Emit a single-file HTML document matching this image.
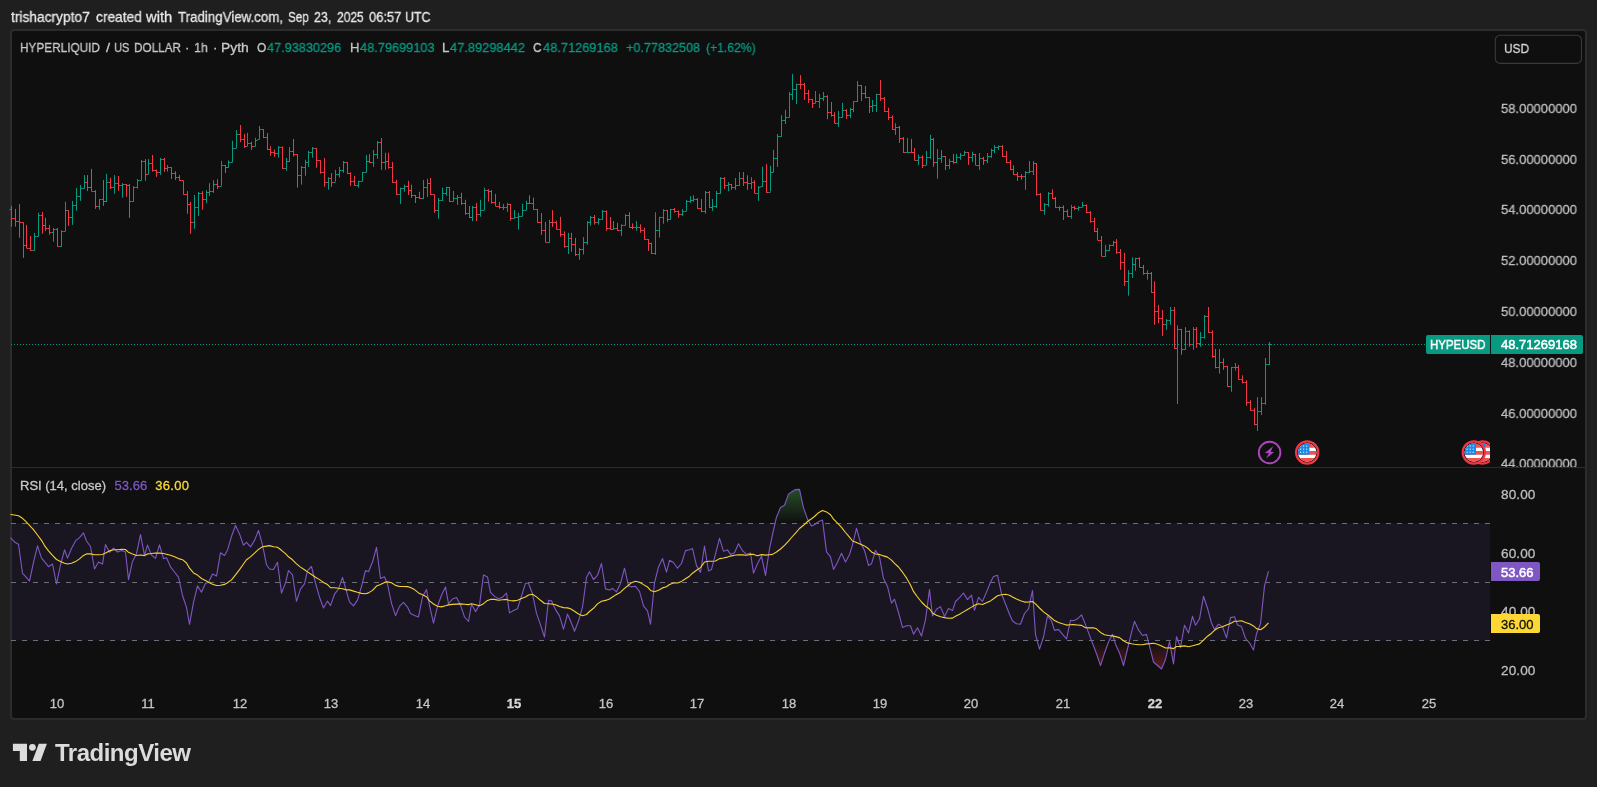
<!DOCTYPE html><html><head><meta charset="utf-8"><title>HYPEUSD chart</title><style>
html,body{margin:0;padding:0}
body{width:1597px;height:787px;background:#1f1f1f;position:relative;overflow:hidden;font-family:"Liberation Sans",sans-serif;color:#c9c9c9}
.t{position:absolute;white-space:nowrap;line-height:1;will-change:transform;-webkit-text-stroke:0.3px}
.ax{font-size:13.6px;color:#bebebe;transform:scaleX(0.957);transform-origin:0 50%}
.tm{font-size:13px;color:#c4c4c4;transform:translateX(-50%)}
.g{color:#089981}
</style></head><body>
<svg width="1597" height="787" viewBox="0 0 1597 787" style="position:absolute;left:0;top:0">
<defs>
<linearGradient id="gob" x1="0" y1="435.3" x2="0" y2="523.3" gradientUnits="userSpaceOnUse"><stop offset="0" stop-color="#4caf50" stop-opacity="1"/><stop offset="1" stop-color="#4caf50" stop-opacity="0"/></linearGradient>
<linearGradient id="gos" x1="0" y1="640.7" x2="0" y2="728.7" gradientUnits="userSpaceOnUse"><stop offset="0" stop-color="#f23645" stop-opacity="0"/><stop offset="1" stop-color="#f23645" stop-opacity="1"/></linearGradient>
<clipPath id="paneclip"><rect x="12" y="31" width="1478" height="436"/></clipPath>
</defs>
<rect x="11" y="30" width="1575" height="689" rx="3" fill="#0f0f0f" stroke="#2c2c2c" stroke-width="2"/>
<rect x="12" y="467" width="1573" height="1" fill="#2c2c2c"/>
<path d="M11 344.5H1426" stroke="#089981" stroke-width="1" stroke-dasharray="1 2" fill="none" shape-rendering="crispEdges"/>
<path d="M34.5 232.9V250.7M32.5 250.5H34.5M34.5 236.5H36.5M38.5 212.8V236.5M36.5 236.5H38.5M38.5 215.5H40.5M53.5 227.9V241.8M51.5 232.5H53.5M53.5 229.5H55.5M61.5 230.3V246.6M59.5 246.5H61.5M61.5 231.5H63.5M65.5 201.8V231.1M63.5 231.5H65.5M65.5 210.5H67.5M72.5 200.9V224.9M70.5 217.5H72.5M72.5 205.5H74.5M76.5 187.9V210.7M74.5 205.5H76.5M76.5 196.5H78.5M80.5 184.9V200.9M78.5 196.5H80.5M80.5 188.5H82.5M84.5 175.1V188.5M82.5 188.5H84.5M84.5 182.5H86.5M99.5 199.1V209.8M97.5 206.5H99.5M99.5 199.5H101.5M106.5 173.9V202.2M104.5 201.5H106.5M106.5 182.5H108.5M114.5 175.1V193.8M112.5 187.5H114.5M114.5 183.5H116.5M122.5 183.1V197.7M120.5 185.5H122.5M122.5 184.5H124.5M133.5 186.2V201.8M131.5 201.5H133.5M133.5 187.5H135.5M137.5 179.0V188.5M135.5 187.5H137.5M137.5 180.5H139.5M141.5 160.0V180.5M139.5 180.5H141.5M141.5 161.5H143.5M148.5 159.1V174.2M146.5 174.5H148.5M148.5 163.5H150.5M160.5 157.9V174.8M158.5 172.5H160.5M160.5 159.5H162.5M167.5 165.0V171.6M165.5 168.5H167.5M167.5 167.5H169.5M194.5 195.0V228.8M192.5 222.5H194.5M194.5 207.5H196.5M198.5 192.0V216.0M196.5 207.5H198.5M198.5 193.5H200.5M206.5 190.2V203.1M204.5 199.5H206.5M206.5 192.5H208.5M209.5 183.1V195.9M207.5 192.5H209.5M209.5 191.5H211.5M213.5 180.1V192.9M211.5 191.5H213.5M213.5 184.5H215.5M221.5 160.9V185.8M219.5 186.5H221.5M221.5 165.5H223.5M228.5 160.4V167.7M226.5 167.5H228.5M228.5 162.5H230.5M232.5 140.8V162.1M230.5 162.5H232.5M232.5 148.5H234.5M236.5 130.1V147.9M234.5 148.5H236.5M236.5 134.5H238.5M247.5 132.8V146.1M245.5 146.5H247.5M247.5 143.5H249.5M255.5 137.8V146.3M253.5 146.5H255.5M255.5 140.5H257.5M259.5 126.0V139.3M257.5 139.5H259.5M259.5 129.5H261.5M278.5 146.1V157.7M276.5 153.5H278.5M278.5 147.5H280.5M286.5 158.0V170.8M284.5 168.5H286.5M286.5 161.5H288.5M289.5 147.0V161.9M287.5 161.5H289.5M289.5 151.5H291.5M301.5 166.0V184.7M299.5 175.5H301.5M301.5 167.5H303.5M305.5 159.8V175.8M303.5 167.5H305.5M305.5 162.5H307.5M308.5 150.9V166.9M306.5 162.5H308.5M308.5 152.5H310.5M312.5 147.0V157.7M310.5 152.5H312.5M312.5 148.5H314.5M328.5 177.2V189.7M326.5 182.5H328.5M328.5 178.5H330.5M335.5 169.9V181.7M333.5 182.5H335.5M335.5 174.5H337.5M339.5 166.9V177.6M337.5 174.5H339.5M339.5 170.5H341.5M343.5 161.0V172.8M341.5 170.5H343.5M343.5 162.5H345.5M358.5 180.8V187.7M356.5 185.5H358.5M358.5 181.5H360.5M362.5 171.9V181.1M360.5 181.5H362.5M362.5 172.5H364.5M366.5 155.0V172.2M364.5 172.5H366.5M366.5 161.5H368.5M373.5 150.0V166.9M371.5 162.5H373.5M373.5 154.5H375.5M377.5 141.1V158.9M375.5 154.5H377.5M377.5 142.5H379.5M385.5 152.7V169.9M383.5 162.5H385.5M385.5 161.5H387.5M400.5 187.7V203.9M398.5 194.5H400.5M400.5 188.5H402.5M404.5 184.7V191.8M402.5 188.5H404.5M404.5 186.5H406.5M423.5 179.9V198.9M421.5 198.5H423.5M423.5 187.5H425.5M427.5 178.8V197.1M425.5 187.5H427.5M427.5 183.5H429.5M438.5 198.0V218.8M436.5 210.5H438.5M438.5 200.5H440.5M442.5 187.7V200.7M440.5 200.5H442.5M442.5 193.5H444.5M446.5 186.8V195.7M444.5 193.5H446.5M446.5 187.5H448.5M453.5 190.9V201.6M451.5 201.5H453.5M453.5 198.5H455.5M457.5 195.0V204.8M455.5 198.5H457.5M457.5 197.5H459.5M472.5 206.0V221.1M470.5 217.5H472.5M472.5 207.5H474.5M480.5 199.8V216.7M478.5 214.5H480.5M480.5 210.5H482.5M484.5 187.7V209.9M482.5 210.5H484.5M484.5 190.5H486.5M503.5 203.9V209.9M501.5 207.5H503.5M503.5 207.5H505.5M507.5 202.8V211.9M505.5 207.5H507.5M507.5 204.5H509.5M514.5 210.0V218.4M512.5 218.5H514.5M514.5 217.5H516.5M518.5 212.7V229.6M516.5 217.5H518.5M518.5 216.5H520.5M522.5 203.8V216.3M520.5 216.5H522.5M522.5 210.5H524.5M526.5 200.8V210.0M524.5 210.5H526.5M526.5 203.5H528.5M549.5 219.8V242.6M547.5 242.5H549.5M549.5 222.5H551.5M568.5 232.8V254.0M566.5 246.5H568.5M568.5 238.5H570.5M579.5 247.9V259.8M577.5 254.5H579.5M579.5 249.5H581.5M583.5 237.1V254.5M581.5 249.5H583.5M583.5 242.5H585.5M587.5 221.1V244.7M585.5 242.5H587.5M587.5 222.5H589.5M590.5 215.9V225.7M588.5 222.5H590.5M590.5 217.5H592.5M598.5 218.0V224.6M596.5 222.5H598.5M598.5 219.5H600.5M602.5 210.0V219.8M600.5 219.5H602.5M602.5 211.5H604.5M613.5 221.1V229.6M611.5 229.5H613.5M613.5 228.5H615.5M621.5 224.3V235.8M619.5 230.5H621.5M621.5 225.5H623.5M625.5 214.1V225.7M623.5 225.5H625.5M625.5 215.5H627.5M636.5 221.1V230.8M634.5 227.5H636.5M636.5 227.5H638.5M655.5 212.2V254.8M653.5 253.5H655.5M655.5 230.5H657.5M659.5 216.8V237.6M657.5 230.5H659.5M659.5 217.5H661.5M663.5 209.1V223.7M661.5 217.5H663.5M663.5 210.5H665.5M670.5 208.8V219.5M668.5 219.5H670.5M670.5 209.5H672.5M682.5 209.1V215.9M680.5 214.5H682.5M682.5 211.5H684.5M686.5 199.9V210.9M684.5 211.5H686.5M686.5 201.5H688.5M690.5 196.2V202.9M688.5 201.5H690.5M690.5 200.5H692.5M693.5 195.3V201.7M691.5 200.5H693.5M693.5 199.5H695.5M705.5 191.0V213.6M703.5 211.5H705.5M705.5 192.5H707.5M712.5 199.0V210.9M710.5 207.5H712.5M712.5 206.5H714.5M716.5 191.0V207.9M714.5 206.5H716.5M716.5 193.5H718.5M720.5 177.1V193.7M718.5 193.5H720.5M720.5 178.5H722.5M728.5 182.1V191.0M726.5 185.5H728.5M728.5 184.5H730.5M735.5 178.0V189.9M733.5 187.5H735.5M735.5 185.5H737.5M739.5 172.1V186.0M737.5 185.5H739.5M739.5 178.5H741.5M751.5 177.1V189.0M749.5 183.5H751.5M751.5 182.5H753.5M758.5 186.0V200.8M756.5 193.5H758.5M758.5 187.5H760.5M762.5 166.7V186.8M760.5 186.5H762.5M762.5 181.5H764.5M770.5 165.8V191.6M768.5 192.5H770.5M770.5 172.5H772.5M773.5 149.8V172.2M771.5 172.5H773.5M773.5 158.5H775.5M777.5 134.0V166.9M775.5 158.5H777.5M777.5 136.5H779.5M781.5 115.2V136.7M779.5 136.5H781.5M781.5 120.5H783.5M785.5 109.8V124.0M783.5 120.5H785.5M785.5 117.5H787.5M789.5 92.0V117.1M787.5 117.5H789.5M789.5 94.5H791.5M792.5 73.9V100.0M790.5 94.5H792.5M792.5 89.5H794.5M796.5 83.7V104.1M794.5 89.5H796.5M796.5 84.5H798.5M815.5 91.1V103.2M813.5 103.5H815.5M815.5 101.5H817.5M819.5 93.8V108.0M817.5 101.5H819.5M819.5 98.5H821.5M823.5 92.0V101.1M821.5 98.5H823.5M823.5 96.5H825.5M838.5 110.9V126.9M836.5 123.5H838.5M838.5 117.5H840.5M842.5 102.9V117.8M840.5 117.5H842.5M842.5 110.5H844.5M850.5 108.0V118.0M848.5 115.5H850.5M850.5 109.5H852.5M853.5 101.1V112.1M851.5 109.5H853.5M853.5 101.5H855.5M857.5 81.0V102.0M855.5 101.5H857.5M857.5 85.5H859.5M872.5 100.0V112.1M870.5 106.5H872.5M872.5 105.5H874.5M876.5 93.8V112.1M874.5 105.5H876.5M876.5 94.5H878.5M895.5 123.2V134.9M893.5 129.5H895.5M895.5 127.5H897.5M907.5 137.9V152.7M905.5 152.5H907.5M907.5 152.5H909.5M918.5 154.5V164.9M916.5 160.5H918.5M918.5 157.5H920.5M926.5 150.9V164.9M924.5 165.5H926.5M926.5 157.5H928.5M930.5 134.9V158.9M928.5 157.5H930.5M930.5 139.5H932.5M937.5 149.1V178.8M935.5 162.5H937.5M937.5 158.5H939.5M941.5 150.0V162.8M939.5 158.5H941.5M941.5 156.5H943.5M949.5 158.9V169.0M947.5 165.5H949.5M949.5 161.5H951.5M956.5 153.9V163.2M954.5 162.5H956.5M956.5 157.5H958.5M960.5 153.0V159.8M958.5 157.5H960.5M960.5 155.5H962.5M964.5 150.9V155.7M962.5 155.5H964.5M964.5 152.5H966.5M972.5 151.8V161.9M970.5 157.5H972.5M972.5 154.5H974.5M979.5 153.0V169.9M977.5 165.5H979.5M979.5 158.5H981.5M987.5 153.0V163.2M985.5 160.5H987.5M987.5 156.5H989.5M991.5 148.6V157.8M989.5 156.5H991.5M991.5 150.5H993.5M994.5 145.0V153.0M992.5 150.5H994.5M994.5 147.5H996.5M998.5 145.4V150.0M996.5 147.5H998.5M998.5 146.5H1000.5M1025.5 171.1V189.8M1023.5 176.5H1025.5M1025.5 172.5H1027.5M1029.5 161.0V172.9M1027.5 172.5H1029.5M1029.5 171.5H1031.5M1033.5 161.0V175.0M1031.5 171.5H1033.5M1033.5 163.5H1035.5M1044.5 203.1V214.7M1042.5 210.5H1044.5M1044.5 204.5H1046.5M1048.5 192.1V206.7M1046.5 204.5H1048.5M1048.5 193.5H1050.5M1059.5 206.2V210.8M1057.5 207.5H1059.5M1059.5 207.5H1061.5M1071.5 204.9V218.8M1069.5 216.5H1071.5M1071.5 207.5H1073.5M1078.5 206.2V210.8M1076.5 208.5H1078.5M1078.5 207.5H1080.5M1082.5 201.9V207.2M1080.5 207.5H1082.5M1082.5 205.5H1084.5M1105.5 244.9V256.8M1103.5 256.5H1105.5M1105.5 250.5H1107.5M1109.5 244.4V251.1M1107.5 250.5H1109.5M1109.5 245.5H1111.5M1113.5 240.8V246.2M1111.5 245.5H1113.5M1113.5 242.5H1115.5M1128.5 270.2V295.7M1126.5 281.5H1128.5M1128.5 273.5H1130.5M1132.5 257.3V277.9M1130.5 273.5H1132.5M1132.5 264.5H1134.5M1135.5 257.8V270.8M1133.5 264.5H1135.5M1135.5 258.5H1137.5M1147.5 270.2V279.7M1145.5 273.5H1147.5M1147.5 273.5H1149.5M1166.5 319.1V329.8M1164.5 324.5H1166.5M1166.5 320.5H1168.5M1170.5 307.0V324.8M1168.5 320.5H1170.5M1170.5 310.5H1172.5M1177.5 325.4V404.0M1175.5 348.5H1177.5M1177.5 329.5H1179.5M1185.5 327.1V349.7M1183.5 349.5H1185.5M1185.5 331.5H1187.5M1193.5 327.1V349.7M1191.5 344.5H1193.5M1193.5 329.5H1195.5M1200.5 331.9V346.7M1198.5 343.5H1200.5M1200.5 337.5H1202.5M1204.5 315.0V338.7M1202.5 337.5H1204.5M1204.5 316.5H1206.5M1219.5 349.0V373.7M1217.5 367.5H1219.5M1219.5 362.5H1221.5M1231.5 366.9V391.8M1229.5 386.5H1231.5M1231.5 367.5H1233.5M1235.5 363.0V370.5M1233.5 367.5H1235.5M1235.5 367.5H1237.5M1257.5 397.1V430.9M1255.5 424.5H1257.5M1257.5 411.5H1259.5M1261.5 397.1V414.9M1259.5 411.5H1261.5M1261.5 403.5H1263.5M1265.5 358.0V404.6M1263.5 403.5H1265.5M1265.5 364.5H1267.5M1269.5 342.0V364.8M1267.5 364.5H1269.5M1269.5 344.5H1271.5" stroke="#089981" stroke-width="1" fill="none"/>
<path d="M11.5 205.9V226.7M9.5 209.5H11.5M11.5 218.5H13.5M15.5 208.9V226.7M13.5 218.5H15.5M15.5 221.5H17.5M19.5 204.1V237.7M17.5 221.5H19.5M19.5 222.5H21.5M23.5 222.3V257.8M21.5 222.5H23.5M23.5 245.5H25.5M26.5 224.9V248.0M24.5 245.5H26.5M26.5 248.5H28.5M30.5 236.0V250.7M28.5 248.5H30.5M30.5 250.5H32.5M42.5 211.9V233.8M40.5 215.5H42.5M42.5 225.5H44.5M45.5 217.8V231.1M43.5 225.5H45.5M45.5 228.5H47.5M49.5 224.9V234.7M47.5 228.5H49.5M49.5 232.5H51.5M57.5 227.9V246.6M55.5 229.5H57.5M57.5 246.5H59.5M68.5 210.3V225.8M66.5 210.5H68.5M68.5 217.5H70.5M87.5 175.1V191.1M85.5 182.5H87.5M87.5 187.5H89.5M91.5 168.9V191.1M89.5 187.5H91.5M91.5 191.5H93.5M95.5 190.2V208.9M93.5 191.5H95.5M95.5 206.5H97.5M103.5 179.9V205.9M101.5 199.5H103.5M103.5 201.5H105.5M110.5 177.8V189.0M108.5 182.5H110.5M110.5 187.5H112.5M118.5 176.0V190.8M116.5 183.5H118.5M118.5 185.5H120.5M126.5 184.0V196.8M124.5 184.5H126.5M126.5 185.5H128.5M129.5 184.0V217.8M127.5 185.5H129.5M129.5 201.5H131.5M145.5 159.1V180.8M143.5 161.5H145.5M145.5 174.5H147.5M152.5 155.0V171.6M150.5 163.5H152.5M152.5 170.5H154.5M156.5 169.4V176.9M154.5 170.5H156.5M156.5 172.5H158.5M164.5 157.9V171.9M162.5 159.5H164.5M164.5 168.5H166.5M171.5 167.1V179.0M169.5 167.5H171.5M171.5 173.5H173.5M175.5 171.2V179.9M173.5 173.5H175.5M175.5 177.5H177.5M179.5 175.1V180.8M177.5 177.5H179.5M179.5 180.5H181.5M183.5 180.5V194.7M181.5 180.5H183.5M183.5 194.5H185.5M187.5 191.1V213.7M185.5 194.5H187.5M187.5 204.5H189.5M190.5 201.8V233.8M188.5 204.5H190.5M190.5 222.5H192.5M202.5 191.1V209.8M200.5 193.5H202.5M202.5 199.5H204.5M217.5 179.2V189.0M215.5 184.5H217.5M217.5 186.5H219.5M225.5 165.0V173.0M223.5 165.5H225.5M225.5 167.5H227.5M240.5 125.0V142.2M238.5 134.5H240.5M240.5 139.5H242.5M244.5 133.9V147.9M242.5 139.5H244.5M244.5 146.5H246.5M251.5 141.7V149.9M249.5 143.5H251.5M251.5 146.5H253.5M263.5 129.2V138.1M261.5 129.5H263.5M263.5 137.5H265.5M267.5 133.1V150.0M265.5 137.5H267.5M267.5 149.5H269.5M270.5 146.1V155.9M268.5 149.5H270.5M270.5 152.5H272.5M274.5 149.5V156.8M272.5 152.5H274.5M274.5 153.5H276.5M282.5 146.5V169.0M280.5 147.5H282.5M282.5 168.5H284.5M293.5 139.0V156.6M291.5 151.5H293.5M293.5 154.5H295.5M297.5 154.5V187.7M295.5 154.5H297.5M297.5 175.5H299.5M316.5 147.9V167.8M314.5 148.5H316.5M316.5 160.5H318.5M320.5 160.3V173.7M318.5 160.5H320.5M320.5 172.5H322.5M324.5 158.0V186.8M322.5 172.5H324.5M324.5 182.5H326.5M331.5 173.1V186.8M329.5 178.5H331.5M331.5 182.5H333.5M347.5 162.1V174.0M345.5 162.5H347.5M347.5 173.5H349.5M350.5 172.2V185.9M348.5 173.5H350.5M350.5 181.5H352.5M354.5 175.8V185.6M352.5 181.5H354.5M354.5 185.5H356.5M369.5 154.1V162.8M367.5 161.5H369.5M369.5 162.5H371.5M381.5 137.9V169.9M379.5 142.5H381.5M381.5 162.5H383.5M388.5 152.7V168.7M386.5 161.5H388.5M388.5 167.5H390.5M392.5 161.9V182.9M390.5 167.5H392.5M392.5 182.5H394.5M396.5 179.9V195.0M394.5 182.5H396.5M396.5 194.5H398.5M408.5 180.8V195.0M406.5 186.5H408.5M408.5 190.5H410.5M411.5 184.7V198.0M409.5 190.5H411.5M411.5 195.5H413.5M415.5 195.0V203.0M413.5 195.5H415.5M415.5 197.5H417.5M419.5 191.8V198.9M417.5 197.5H419.5M419.5 198.5H421.5M430.5 177.9V195.0M428.5 183.5H430.5M430.5 194.5H432.5M434.5 194.5V212.8M432.5 194.5H434.5M434.5 210.5H436.5M449.5 187.0V201.9M447.5 187.5H449.5M449.5 201.5H451.5M461.5 192.7V204.8M459.5 197.5H461.5M461.5 203.5H463.5M465.5 199.8V214.9M463.5 203.5H465.5M465.5 213.5H467.5M469.5 206.0V217.9M467.5 213.5H469.5M469.5 217.5H471.5M476.5 202.8V221.1M474.5 207.5H476.5M476.5 214.5H478.5M488.5 189.1V201.6M486.5 190.5H488.5M488.5 191.5H490.5M491.5 190.0V203.7M489.5 191.5H491.5M491.5 202.5H493.5M495.5 193.9V206.0M493.5 202.5H495.5M495.5 206.5H497.5M499.5 201.9V208.7M497.5 206.5H499.5M499.5 207.5H501.5M510.5 203.8V220.7M508.5 204.5H510.5M510.5 218.5H512.5M529.5 195.3V203.8M527.5 203.5H529.5M529.5 203.5H531.5M533.5 197.6V209.7M531.5 203.5H533.5M533.5 209.5H535.5M537.5 209.1V222.8M535.5 209.5H537.5M537.5 222.5H539.5M541.5 213.1V234.9M539.5 222.5H541.5M541.5 230.5H543.5M545.5 221.9V242.0M543.5 230.5H545.5M545.5 242.5H547.5M552.5 210.0V226.9M550.5 222.5H552.5M552.5 222.5H554.5M556.5 220.7V229.6M554.5 222.5H556.5M556.5 229.5H558.5M560.5 216.8V236.7M558.5 229.5H560.5M560.5 234.5H562.5M564.5 231.4V247.7M562.5 234.5H564.5M564.5 246.5H566.5M571.5 232.8V251.8M569.5 238.5H571.5M571.5 244.5H573.5M575.5 237.9V255.9M573.5 244.5H575.5M575.5 254.5H577.5M594.5 215.0V224.6M592.5 217.5H594.5M594.5 222.5H596.5M606.5 210.4V230.8M604.5 211.5H606.5M606.5 228.5H608.5M610.5 217.1V229.6M608.5 228.5H610.5M610.5 229.5H612.5M617.5 222.8V230.8M615.5 228.5H617.5M617.5 230.5H619.5M629.5 212.2V227.8M627.5 215.5H629.5M629.5 227.5H631.5M632.5 223.4V229.1M630.5 227.5H632.5M632.5 227.5H634.5M640.5 224.3V232.8M638.5 227.5H640.5M640.5 230.5H642.5M644.5 227.8V239.7M642.5 230.5H644.5M644.5 239.5H646.5M648.5 239.0V250.9M646.5 239.5H648.5M648.5 243.5H650.5M651.5 242.6V254.0M649.5 243.5H651.5M651.5 253.5H653.5M667.5 210.0V221.9M665.5 210.5H667.5M667.5 219.5H669.5M674.5 207.9V212.7M672.5 209.5H674.5M674.5 211.5H676.5M678.5 210.4V217.7M676.5 211.5H678.5M678.5 214.5H680.5M697.5 198.1V208.8M695.5 199.5H697.5M697.5 208.5H699.5M701.5 199.0V212.2M699.5 208.5H701.5M701.5 211.5H703.5M709.5 191.0V207.7M707.5 192.5H709.5M709.5 207.5H711.5M724.5 177.1V189.0M722.5 178.5H724.5M724.5 185.5H726.5M731.5 183.9V189.9M729.5 184.5H731.5M731.5 187.5H733.5M743.5 172.1V186.0M741.5 178.5H743.5M743.5 182.5H745.5M747.5 175.3V189.9M745.5 182.5H747.5M747.5 183.5H749.5M754.5 180.2V193.1M752.5 182.5H754.5M754.5 193.5H756.5M766.5 164.1V192.7M764.5 181.5H766.5M766.5 192.5H768.5M800.5 75.1V89.0M798.5 84.5H800.5M800.5 84.5H802.5M804.5 82.8V100.0M802.5 84.5H804.5M804.5 93.5H806.5M808.5 89.9V102.9M806.5 93.5H808.5M808.5 99.5H810.5M812.5 98.8V108.0M810.5 99.5H812.5M812.5 103.5H814.5M827.5 95.2V119.2M825.5 96.5H827.5M827.5 112.5H829.5M831.5 102.0V116.6M829.5 112.5H831.5M831.5 115.5H833.5M834.5 112.1V123.2M832.5 115.5H834.5M834.5 123.5H836.5M846.5 109.1V118.9M844.5 110.5H846.5M846.5 115.5H848.5M861.5 85.1V101.1M859.5 85.5H861.5M861.5 93.5H863.5M865.5 86.0V98.3M863.5 93.5H865.5M865.5 97.5H867.5M869.5 97.0V113.0M867.5 97.5H869.5M869.5 106.5H871.5M880.5 80.1V100.9M878.5 94.5H880.5M880.5 98.5H882.5M884.5 97.0V112.1M882.5 98.5H884.5M884.5 111.5H886.5M888.5 107.7V120.1M886.5 111.5H888.5M888.5 117.5H890.5M892.5 115.3V129.9M890.5 117.5H892.5M892.5 129.5H894.5M899.5 126.0V142.9M897.5 127.5H899.5M899.5 138.5H901.5M903.5 137.0V153.0M901.5 138.5H903.5M903.5 152.5H905.5M911.5 138.8V152.1M909.5 152.5H911.5M911.5 152.5H913.5M914.5 148.1V160.1M912.5 152.5H914.5M914.5 160.5H916.5M922.5 155.2V168.1M920.5 157.5H922.5M922.5 165.5H924.5M933.5 137.9V166.9M931.5 139.5H933.5M933.5 162.5H935.5M945.5 156.2V169.9M943.5 156.5H945.5M945.5 165.5H947.5M953.5 153.9V163.7M951.5 161.5H953.5M953.5 162.5H955.5M968.5 152.1V164.9M966.5 152.5H968.5M968.5 157.5H970.5M975.5 153.9V164.9M973.5 154.5H975.5M975.5 165.5H977.5M983.5 156.9V164.9M981.5 158.5H983.5M983.5 160.5H985.5M1002.5 145.0V156.9M1000.5 146.5H1002.5M1002.5 156.5H1004.5M1006.5 150.9V163.2M1004.5 156.5H1006.5M1006.5 162.5H1008.5M1010.5 160.1V170.2M1008.5 162.5H1010.5M1010.5 169.5H1012.5M1013.5 165.3V175.0M1011.5 169.5H1013.5M1013.5 174.5H1015.5M1017.5 172.0V180.9M1015.5 174.5H1017.5M1017.5 176.5H1019.5M1021.5 174.1V179.7M1019.5 176.5H1021.5M1021.5 176.5H1023.5M1036.5 163.1V195.7M1034.5 163.5H1036.5M1036.5 194.5H1038.5M1040.5 193.0V210.8M1038.5 194.5H1040.5M1040.5 210.5H1042.5M1052.5 189.3V198.7M1050.5 193.5H1052.5M1052.5 198.5H1054.5M1055.5 196.9V207.9M1053.5 198.5H1055.5M1055.5 207.5H1057.5M1063.5 205.3V220.0M1061.5 207.5H1063.5M1063.5 211.5H1065.5M1067.5 209.4V216.8M1065.5 211.5H1067.5M1067.5 216.5H1069.5M1074.5 205.8V209.9M1072.5 207.5H1074.5M1074.5 208.5H1076.5M1086.5 204.4V213.3M1084.5 205.5H1086.5M1086.5 212.5H1088.5M1090.5 211.1V222.7M1088.5 212.5H1090.5M1090.5 221.5H1092.5M1094.5 217.7V231.9M1092.5 221.5H1094.5M1094.5 231.5H1096.5M1097.5 228.0V240.1M1095.5 231.5H1097.5M1097.5 240.5H1099.5M1101.5 236.0V256.0M1099.5 240.5H1101.5M1101.5 256.5H1103.5M1116.5 239.1V253.8M1114.5 242.5H1116.5M1116.5 252.5H1118.5M1120.5 249.0V269.8M1118.5 252.5H1120.5M1120.5 262.5H1122.5M1124.5 252.8V285.9M1122.5 262.5H1124.5M1124.5 281.5H1126.5M1139.5 257.3V267.6M1137.5 258.5H1139.5M1139.5 267.5H1141.5M1143.5 264.9V274.7M1141.5 267.5H1143.5M1143.5 273.5H1145.5M1151.5 272.0V292.8M1149.5 273.5H1151.5M1151.5 292.5H1153.5M1154.5 281.3V324.8M1152.5 292.5H1154.5M1154.5 311.5H1156.5M1158.5 304.9V323.2M1156.5 311.5H1158.5M1158.5 318.5H1160.5M1162.5 309.9V336.0M1160.5 318.5H1162.5M1162.5 324.5H1164.5M1174.5 307.0V348.8M1172.5 310.5H1174.5M1174.5 348.5H1176.5M1181.5 328.9V354.7M1179.5 329.5H1181.5M1181.5 349.5H1183.5M1189.5 330.3V346.7M1187.5 331.5H1189.5M1189.5 344.5H1191.5M1196.5 327.1V347.9M1194.5 329.5H1196.5M1196.5 343.5H1198.5M1208.5 307.0V332.8M1206.5 316.5H1208.5M1208.5 332.5H1210.5M1212.5 330.3V357.7M1210.5 332.5H1212.5M1212.5 356.5H1214.5M1215.5 349.0V368.4M1213.5 356.5H1215.5M1215.5 367.5H1217.5M1223.5 358.3V369.8M1221.5 362.5H1223.5M1223.5 366.5H1225.5M1227.5 365.7V386.8M1225.5 366.5H1227.5M1227.5 386.5H1229.5M1238.5 365.1V379.9M1236.5 367.5H1238.5M1238.5 379.5H1240.5M1242.5 375.3V383.3M1240.5 379.5H1242.5M1242.5 382.5H1244.5M1246.5 380.2V405.7M1244.5 382.5H1246.5M1246.5 402.5H1248.5M1250.5 400.2V410.8M1248.5 402.5H1250.5M1250.5 410.5H1252.5M1254.5 407.8V425.2M1252.5 410.5H1254.5M1254.5 424.5H1256.5" stroke="#f23645" stroke-width="1" fill="none"/>
<g transform="translate(1269.6 452.5)"><circle r="10.8" fill="#0f0f0f" stroke="#ab47bc" stroke-width="1.9"/><path d="M3.43 -6.26 L-4.68 0.4 L-0.6 0.85 L-3.68 6 L4.53 -0.5 L1.1 -0.85 Z" fill="#ab47bc"/></g>
<g transform="translate(1307.2 452.5)"><circle r="11.1" fill="#0f0f0f" stroke="#f23645" stroke-width="2.2"/><clipPath id="fc1307"><circle r="9.3"/></clipPath><g clip-path="url(#fc1307)"><rect x="-10" y="-10" width="20" height="20" fill="#fff"/><rect x="-10" y="-10" width="20" height="5.25" fill="#ef5350"/><rect x="-10" y="-1.5" width="20" height="3.75" fill="#ef5350"/><rect x="-10" y="5.5" width="20" height="5" fill="#ef5350"/><rect x="-10" y="-10" width="12.25" height="12.25" fill="#1e88e5"/><g fill="#fff" fill-opacity="0.8"><rect x="-7.20" y="-7.00" width="1.2" height="1.2"/><rect x="-7.20" y="-3.90" width="1.2" height="1.2"/><rect x="-7.20" y="-0.85" width="1.2" height="1.2"/><rect x="-4.20" y="-7.00" width="1.2" height="1.2"/><rect x="-4.20" y="-3.90" width="1.2" height="1.2"/><rect x="-4.20" y="-0.85" width="1.2" height="1.2"/><rect x="-1.15" y="-7.00" width="1.2" height="1.2"/><rect x="-1.15" y="-3.90" width="1.2" height="1.2"/><rect x="-1.15" y="-0.85" width="1.2" height="1.2"/></g></g></g>
<g clip-path="url(#paneclip)"><g transform="translate(1482.8 452.5)"><circle r="11.1" fill="#0f0f0f" stroke="#f23645" stroke-width="2.2"/><clipPath id="fc1482"><circle r="9.3"/></clipPath><g clip-path="url(#fc1482)"><rect x="-10" y="-10" width="20" height="20" fill="#fff"/><rect x="-10" y="-10" width="20" height="5.25" fill="#ef5350"/><rect x="-10" y="-1.5" width="20" height="3.75" fill="#ef5350"/><rect x="-10" y="5.5" width="20" height="5" fill="#ef5350"/><rect x="-10" y="-10" width="12.25" height="12.25" fill="#1e88e5"/><g fill="#fff" fill-opacity="0.8"><rect x="-7.20" y="-7.00" width="1.2" height="1.2"/><rect x="-7.20" y="-3.90" width="1.2" height="1.2"/><rect x="-7.20" y="-0.85" width="1.2" height="1.2"/><rect x="-4.20" y="-7.00" width="1.2" height="1.2"/><rect x="-4.20" y="-3.90" width="1.2" height="1.2"/><rect x="-4.20" y="-0.85" width="1.2" height="1.2"/><rect x="-1.15" y="-7.00" width="1.2" height="1.2"/><rect x="-1.15" y="-3.90" width="1.2" height="1.2"/><rect x="-1.15" y="-0.85" width="1.2" height="1.2"/></g></g></g><g transform="translate(1473.8 452.5)"><circle r="11.1" fill="#0f0f0f" stroke="#f23645" stroke-width="2.2"/><clipPath id="fc1473"><circle r="9.3"/></clipPath><g clip-path="url(#fc1473)"><rect x="-10" y="-10" width="20" height="20" fill="#fff"/><rect x="-10" y="-10" width="20" height="5.25" fill="#ef5350"/><rect x="-10" y="-1.5" width="20" height="3.75" fill="#ef5350"/><rect x="-10" y="5.5" width="20" height="5" fill="#ef5350"/><rect x="-10" y="-10" width="12.25" height="12.25" fill="#1e88e5"/><g fill="#fff" fill-opacity="0.8"><rect x="-7.20" y="-7.00" width="1.2" height="1.2"/><rect x="-7.20" y="-3.90" width="1.2" height="1.2"/><rect x="-7.20" y="-0.85" width="1.2" height="1.2"/><rect x="-4.20" y="-7.00" width="1.2" height="1.2"/><rect x="-4.20" y="-3.90" width="1.2" height="1.2"/><rect x="-4.20" y="-0.85" width="1.2" height="1.2"/><rect x="-1.15" y="-7.00" width="1.2" height="1.2"/><rect x="-1.15" y="-3.90" width="1.2" height="1.2"/><rect x="-1.15" y="-0.85" width="1.2" height="1.2"/></g></g></g></g>
<rect x="12" y="523.3" width="1478" height="117.3" fill="#7e57c2" fill-opacity="0.1"/>
<path d="M10.5 523.3 L14.5 523.3 L18.5 523.3 L22.5 523.3 L25.5 523.3 L29.5 523.3 L33.5 523.3 L37.5 523.3 L41.5 523.3 L44.5 523.3 L48.5 523.3 L52.5 523.3 L56.5 523.3 L60.5 523.3 L64.5 523.3 L67.5 523.3 L71.5 523.3 L75.5 523.3 L79.5 523.3 L83.5 523.3 L86.5 523.3 L90.5 523.3 L94.5 523.3 L98.5 523.3 L102.5 523.3 L105.5 523.3 L109.5 523.3 L113.5 523.3 L117.5 523.3 L121.5 523.3 L125.5 523.3 L128.5 523.3 L132.5 523.3 L136.5 523.3 L140.5 523.3 L144.5 523.3 L147.5 523.3 L151.5 523.3 L155.5 523.3 L159.5 523.3 L163.5 523.3 L166.5 523.3 L170.5 523.3 L174.5 523.3 L178.5 523.3 L182.5 523.3 L186.5 523.3 L189.5 523.3 L193.5 523.3 L197.5 523.3 L201.5 523.3 L205.5 523.3 L208.5 523.3 L212.5 523.3 L216.5 523.3 L220.5 523.3 L224.5 523.3 L227.5 523.3 L231.5 523.3 L235.5 523.3 L239.5 523.3 L243.5 523.3 L246.5 523.3 L250.5 523.3 L254.5 523.3 L258.5 523.3 L262.5 523.3 L266.5 523.3 L269.5 523.3 L273.5 523.3 L277.5 523.3 L281.5 523.3 L285.5 523.3 L288.5 523.3 L292.5 523.3 L296.5 523.3 L300.5 523.3 L304.5 523.3 L307.5 523.3 L311.5 523.3 L315.5 523.3 L319.5 523.3 L323.5 523.3 L327.5 523.3 L330.5 523.3 L334.5 523.3 L338.5 523.3 L342.5 523.3 L346.5 523.3 L349.5 523.3 L353.5 523.3 L357.5 523.3 L361.5 523.3 L365.5 523.3 L368.5 523.3 L372.5 523.3 L376.5 523.3 L380.5 523.3 L384.5 523.3 L387.5 523.3 L391.5 523.3 L395.5 523.3 L399.5 523.3 L403.5 523.3 L407.5 523.3 L410.5 523.3 L414.5 523.3 L418.5 523.3 L422.5 523.3 L426.5 523.3 L429.5 523.3 L433.5 523.3 L437.5 523.3 L441.5 523.3 L445.5 523.3 L448.5 523.3 L452.5 523.3 L456.5 523.3 L460.5 523.3 L464.5 523.3 L468.5 523.3 L471.5 523.3 L475.5 523.3 L479.5 523.3 L483.5 523.3 L487.5 523.3 L490.5 523.3 L494.5 523.3 L498.5 523.3 L502.5 523.3 L506.5 523.3 L509.5 523.3 L513.5 523.3 L517.5 523.3 L521.5 523.3 L525.5 523.3 L528.5 523.3 L532.5 523.3 L536.5 523.3 L540.5 523.3 L544.5 523.3 L548.5 523.3 L551.5 523.3 L555.5 523.3 L559.5 523.3 L563.5 523.3 L567.5 523.3 L570.5 523.3 L574.5 523.3 L578.5 523.3 L582.5 523.3 L586.5 523.3 L589.5 523.3 L593.5 523.3 L597.5 523.3 L601.5 523.3 L605.5 523.3 L609.5 523.3 L612.5 523.3 L616.5 523.3 L620.5 523.3 L624.5 523.3 L628.5 523.3 L631.5 523.3 L635.5 523.3 L639.5 523.3 L643.5 523.3 L647.5 523.3 L650.5 523.3 L654.5 523.3 L658.5 523.3 L662.5 523.3 L666.5 523.3 L669.5 523.3 L673.5 523.3 L677.5 523.3 L681.5 523.3 L685.5 523.3 L689.5 523.3 L692.5 523.3 L696.5 523.3 L700.5 523.3 L704.5 523.3 L708.5 523.3 L711.5 523.3 L715.5 523.3 L719.5 523.3 L723.5 523.3 L727.5 523.3 L730.5 523.3 L734.5 523.3 L738.5 523.3 L742.5 523.3 L746.5 523.3 L750.5 523.3 L753.5 523.3 L757.5 523.3 L761.5 523.3 L765.5 523.3 L769.5 523.3 L772.5 523.3 L776.5 517.2 L780.5 507.5 L784.5 505.2 L788.5 494.1 L791.5 491.9 L795.5 489.6 L799.5 489.4 L803.5 507.9 L807.5 519.1 L811.5 523.3 L814.5 523.3 L818.5 521.7 L822.5 520.1 L826.5 523.3 L830.5 523.3 L833.5 523.3 L837.5 523.3 L841.5 523.3 L845.5 523.3 L849.5 523.3 L852.5 523.3 L856.5 523.3 L860.5 523.3 L864.5 523.3 L868.5 523.3 L871.5 523.3 L875.5 523.3 L879.5 523.3 L883.5 523.3 L887.5 523.3 L891.5 523.3 L894.5 523.3 L898.5 523.3 L902.5 523.3 L906.5 523.3 L910.5 523.3 L913.5 523.3 L917.5 523.3 L921.5 523.3 L925.5 523.3 L929.5 523.3 L932.5 523.3 L936.5 523.3 L940.5 523.3 L944.5 523.3 L948.5 523.3 L952.5 523.3 L955.5 523.3 L959.5 523.3 L963.5 523.3 L967.5 523.3 L971.5 523.3 L974.5 523.3 L978.5 523.3 L982.5 523.3 L986.5 523.3 L990.5 523.3 L993.5 523.3 L997.5 523.3 L1001.5 523.3 L1005.5 523.3 L1009.5 523.3 L1012.5 523.3 L1016.5 523.3 L1020.5 523.3 L1024.5 523.3 L1028.5 523.3 L1032.5 523.3 L1035.5 523.3 L1039.5 523.3 L1043.5 523.3 L1047.5 523.3 L1051.5 523.3 L1054.5 523.3 L1058.5 523.3 L1062.5 523.3 L1066.5 523.3 L1070.5 523.3 L1073.5 523.3 L1077.5 523.3 L1081.5 523.3 L1085.5 523.3 L1089.5 523.3 L1093.5 523.3 L1096.5 523.3 L1100.5 523.3 L1104.5 523.3 L1108.5 523.3 L1112.5 523.3 L1115.5 523.3 L1119.5 523.3 L1123.5 523.3 L1127.5 523.3 L1131.5 523.3 L1134.5 523.3 L1138.5 523.3 L1142.5 523.3 L1146.5 523.3 L1150.5 523.3 L1153.5 523.3 L1157.5 523.3 L1161.5 523.3 L1165.5 523.3 L1169.5 523.3 L1173.5 523.3 L1176.5 523.3 L1180.5 523.3 L1184.5 523.3 L1188.5 523.3 L1192.5 523.3 L1195.5 523.3 L1199.5 523.3 L1203.5 523.3 L1207.5 523.3 L1211.5 523.3 L1214.5 523.3 L1218.5 523.3 L1222.5 523.3 L1226.5 523.3 L1230.5 523.3 L1234.5 523.3 L1237.5 523.3 L1241.5 523.3 L1245.5 523.3 L1249.5 523.3 L1253.5 523.3 L1256.5 523.3 L1260.5 523.3 L1264.5 523.3 L1268.5 523.3 L1268.5 523.3 L10.5 523.3Z" fill="url(#gob)"/><path d="M10.5 640.7 L14.5 640.7 L18.5 640.7 L22.5 640.7 L25.5 640.7 L29.5 640.7 L33.5 640.7 L37.5 640.7 L41.5 640.7 L44.5 640.7 L48.5 640.7 L52.5 640.7 L56.5 640.7 L60.5 640.7 L64.5 640.7 L67.5 640.7 L71.5 640.7 L75.5 640.7 L79.5 640.7 L83.5 640.7 L86.5 640.7 L90.5 640.7 L94.5 640.7 L98.5 640.7 L102.5 640.7 L105.5 640.7 L109.5 640.7 L113.5 640.7 L117.5 640.7 L121.5 640.7 L125.5 640.7 L128.5 640.7 L132.5 640.7 L136.5 640.7 L140.5 640.7 L144.5 640.7 L147.5 640.7 L151.5 640.7 L155.5 640.7 L159.5 640.7 L163.5 640.7 L166.5 640.7 L170.5 640.7 L174.5 640.7 L178.5 640.7 L182.5 640.7 L186.5 640.7 L189.5 640.7 L193.5 640.7 L197.5 640.7 L201.5 640.7 L205.5 640.7 L208.5 640.7 L212.5 640.7 L216.5 640.7 L220.5 640.7 L224.5 640.7 L227.5 640.7 L231.5 640.7 L235.5 640.7 L239.5 640.7 L243.5 640.7 L246.5 640.7 L250.5 640.7 L254.5 640.7 L258.5 640.7 L262.5 640.7 L266.5 640.7 L269.5 640.7 L273.5 640.7 L277.5 640.7 L281.5 640.7 L285.5 640.7 L288.5 640.7 L292.5 640.7 L296.5 640.7 L300.5 640.7 L304.5 640.7 L307.5 640.7 L311.5 640.7 L315.5 640.7 L319.5 640.7 L323.5 640.7 L327.5 640.7 L330.5 640.7 L334.5 640.7 L338.5 640.7 L342.5 640.7 L346.5 640.7 L349.5 640.7 L353.5 640.7 L357.5 640.7 L361.5 640.7 L365.5 640.7 L368.5 640.7 L372.5 640.7 L376.5 640.7 L380.5 640.7 L384.5 640.7 L387.5 640.7 L391.5 640.7 L395.5 640.7 L399.5 640.7 L403.5 640.7 L407.5 640.7 L410.5 640.7 L414.5 640.7 L418.5 640.7 L422.5 640.7 L426.5 640.7 L429.5 640.7 L433.5 640.7 L437.5 640.7 L441.5 640.7 L445.5 640.7 L448.5 640.7 L452.5 640.7 L456.5 640.7 L460.5 640.7 L464.5 640.7 L468.5 640.7 L471.5 640.7 L475.5 640.7 L479.5 640.7 L483.5 640.7 L487.5 640.7 L490.5 640.7 L494.5 640.7 L498.5 640.7 L502.5 640.7 L506.5 640.7 L509.5 640.7 L513.5 640.7 L517.5 640.7 L521.5 640.7 L525.5 640.7 L528.5 640.7 L532.5 640.7 L536.5 640.7 L540.5 640.7 L544.5 640.7 L548.5 640.7 L551.5 640.7 L555.5 640.7 L559.5 640.7 L563.5 640.7 L567.5 640.7 L570.5 640.7 L574.5 640.7 L578.5 640.7 L582.5 640.7 L586.5 640.7 L589.5 640.7 L593.5 640.7 L597.5 640.7 L601.5 640.7 L605.5 640.7 L609.5 640.7 L612.5 640.7 L616.5 640.7 L620.5 640.7 L624.5 640.7 L628.5 640.7 L631.5 640.7 L635.5 640.7 L639.5 640.7 L643.5 640.7 L647.5 640.7 L650.5 640.7 L654.5 640.7 L658.5 640.7 L662.5 640.7 L666.5 640.7 L669.5 640.7 L673.5 640.7 L677.5 640.7 L681.5 640.7 L685.5 640.7 L689.5 640.7 L692.5 640.7 L696.5 640.7 L700.5 640.7 L704.5 640.7 L708.5 640.7 L711.5 640.7 L715.5 640.7 L719.5 640.7 L723.5 640.7 L727.5 640.7 L730.5 640.7 L734.5 640.7 L738.5 640.7 L742.5 640.7 L746.5 640.7 L750.5 640.7 L753.5 640.7 L757.5 640.7 L761.5 640.7 L765.5 640.7 L769.5 640.7 L772.5 640.7 L776.5 640.7 L780.5 640.7 L784.5 640.7 L788.5 640.7 L791.5 640.7 L795.5 640.7 L799.5 640.7 L803.5 640.7 L807.5 640.7 L811.5 640.7 L814.5 640.7 L818.5 640.7 L822.5 640.7 L826.5 640.7 L830.5 640.7 L833.5 640.7 L837.5 640.7 L841.5 640.7 L845.5 640.7 L849.5 640.7 L852.5 640.7 L856.5 640.7 L860.5 640.7 L864.5 640.7 L868.5 640.7 L871.5 640.7 L875.5 640.7 L879.5 640.7 L883.5 640.7 L887.5 640.7 L891.5 640.7 L894.5 640.7 L898.5 640.7 L902.5 640.7 L906.5 640.7 L910.5 640.7 L913.5 640.7 L917.5 640.7 L921.5 640.7 L925.5 640.7 L929.5 640.7 L932.5 640.7 L936.5 640.7 L940.5 640.7 L944.5 640.7 L948.5 640.7 L952.5 640.7 L955.5 640.7 L959.5 640.7 L963.5 640.7 L967.5 640.7 L971.5 640.7 L974.5 640.7 L978.5 640.7 L982.5 640.7 L986.5 640.7 L990.5 640.7 L993.5 640.7 L997.5 640.7 L1001.5 640.7 L1005.5 640.7 L1009.5 640.7 L1012.5 640.7 L1016.5 640.7 L1020.5 640.7 L1024.5 640.7 L1028.5 640.7 L1032.5 640.7 L1035.5 640.7 L1039.5 649.1 L1043.5 640.7 L1047.5 640.7 L1051.5 640.7 L1054.5 640.7 L1058.5 640.7 L1062.5 640.7 L1066.5 640.7 L1070.5 640.7 L1073.5 640.7 L1077.5 640.7 L1081.5 640.7 L1085.5 640.7 L1089.5 640.7 L1093.5 645.7 L1096.5 653.8 L1100.5 665.6 L1104.5 653.2 L1108.5 642.0 L1112.5 640.7 L1115.5 644.2 L1119.5 652.9 L1123.5 665.7 L1127.5 649.0 L1131.5 640.7 L1134.5 640.7 L1138.5 640.7 L1142.5 640.7 L1146.5 640.7 L1150.5 650.1 L1153.5 662.0 L1157.5 665.5 L1161.5 669.0 L1165.5 659.5 L1169.5 641.7 L1173.5 663.9 L1176.5 640.7 L1180.5 647.7 L1184.5 640.7 L1188.5 640.7 L1192.5 640.7 L1195.5 640.7 L1199.5 640.7 L1203.5 640.7 L1207.5 640.7 L1211.5 640.7 L1214.5 640.7 L1218.5 640.7 L1222.5 640.7 L1226.5 640.7 L1230.5 640.7 L1234.5 640.7 L1237.5 640.7 L1241.5 640.7 L1245.5 640.7 L1249.5 642.8 L1253.5 650.0 L1256.5 640.7 L1260.5 640.7 L1264.5 640.7 L1268.5 640.7 L1268.5 640.7 L10.5 640.7Z" fill="url(#gos)"/>
<g stroke="#6c6e78" stroke-width="1" stroke-dasharray="5 6" shape-rendering="crispEdges" fill="none"><path d="M11 523.5H1490M11 582.5H1490M11 640.5H1490"/></g>
<polyline points="10.5,537.6 14.5,541.9 18.5,544.2 22.5,573.3 25.5,576.3 29.5,581.2 33.5,562.4 37.5,545.9 41.5,558.1 44.5,561.7 48.5,566.7 52.5,564.0 56.5,583.9 60.5,565.0 64.5,549.8 67.5,558.1 71.5,548.5 75.5,540.9 79.5,537.6 83.5,532.9 86.5,541.0 90.5,546.5 94.5,569.0 98.5,562.0 102.5,564.1 105.5,544.6 109.5,552.3 113.5,548.1 117.5,552.0 121.5,550.4 125.5,552.0 128.5,579.6 132.5,561.4 136.5,553.7 140.5,534.6 144.5,555.3 147.5,545.1 151.5,555.1 155.5,558.4 159.5,544.9 163.5,558.6 166.5,557.7 170.5,566.8 174.5,572.0 178.5,577.2 182.5,595.5 186.5,607.4 189.5,624.3 193.5,602.4 197.5,585.8 201.5,592.2 205.5,583.2 208.5,582.5 212.5,574.1 216.5,576.1 220.5,552.8 224.5,555.5 227.5,550.2 231.5,536.3 235.5,525.5 239.5,533.9 243.5,545.2 246.5,542.3 250.5,546.9 254.5,540.4 258.5,530.4 262.5,544.9 266.5,564.7 269.5,569.0 273.5,569.5 277.5,562.3 281.5,593.1 285.5,582.9 288.5,570.5 292.5,574.9 296.5,601.3 300.5,589.2 304.5,583.9 307.5,570.7 311.5,566.5 315.5,583.0 319.5,597.2 323.5,608.0 327.5,601.0 330.5,605.6 334.5,594.2 338.5,589.1 342.5,577.4 346.5,591.7 349.5,601.8 353.5,605.9 357.5,600.1 361.5,586.3 365.5,570.5 368.5,571.8 372.5,562.0 376.5,547.4 380.5,578.5 384.5,576.7 387.5,584.2 391.5,603.4 395.5,615.7 399.5,606.4 403.5,602.4 407.5,607.1 410.5,613.5 414.5,615.5 418.5,616.9 422.5,597.0 426.5,589.6 429.5,605.3 433.5,623.1 437.5,606.3 441.5,595.2 445.5,586.9 448.5,603.9 452.5,599.0 456.5,597.6 460.5,605.1 464.5,617.0 468.5,621.5 471.5,604.1 475.5,611.6 479.5,605.0 483.5,574.9 487.5,576.9 490.5,592.3 494.5,596.4 498.5,598.8 502.5,597.3 506.5,593.0 509.5,612.9 513.5,610.5 517.5,608.7 521.5,596.0 525.5,583.3 528.5,583.3 532.5,594.0 536.5,613.4 540.5,624.9 544.5,637.0 548.5,600.4 551.5,600.8 555.5,609.6 559.5,615.9 563.5,629.2 567.5,614.1 570.5,620.8 574.5,631.2 578.5,621.0 582.5,607.2 586.5,577.5 589.5,571.8 593.5,579.5 597.5,575.3 601.5,563.5 605.5,588.9 609.5,590.0 612.5,588.4 616.5,591.8 620.5,583.5 624.5,568.2 628.5,585.8 631.5,586.9 635.5,586.3 639.5,591.3 643.5,605.8 647.5,610.8 650.5,624.3 654.5,582.8 658.5,566.9 662.5,558.5 666.5,572.2 669.5,560.3 673.5,562.5 677.5,568.2 681.5,563.5 685.5,550.6 689.5,549.8 692.5,548.6 696.5,565.6 700.5,572.4 704.5,546.1 708.5,571.0 711.5,569.4 715.5,554.1 719.5,538.4 723.5,551.2 727.5,549.9 730.5,554.4 734.5,552.7 738.5,543.8 742.5,550.7 746.5,554.3 750.5,553.0 753.5,573.1 757.5,563.7 761.5,556.2 765.5,575.4 769.5,548.7 772.5,534.7 776.5,517.2 780.5,507.5 784.5,505.2 788.5,494.1 791.5,491.9 795.5,489.6 799.5,489.4 803.5,507.9 807.5,519.1 811.5,526.0 814.5,524.8 818.5,521.7 822.5,520.1 826.5,551.9 830.5,556.8 833.5,569.4 837.5,562.2 841.5,553.3 845.5,562.1 849.5,554.5 852.5,544.8 856.5,528.4 860.5,542.7 864.5,550.4 868.5,565.4 871.5,563.8 875.5,550.4 879.5,556.8 883.5,578.6 887.5,586.4 891.5,603.2 894.5,599.2 898.5,612.5 902.5,627.4 906.5,625.8 910.5,625.8 913.5,634.1 917.5,627.8 921.5,636.1 925.5,619.7 929.5,589.6 932.5,616.0 936.5,609.3 940.5,606.6 944.5,616.4 948.5,608.6 952.5,610.6 955.5,601.5 959.5,597.6 963.5,593.0 967.5,599.6 971.5,595.2 974.5,610.3 978.5,597.4 982.5,601.4 986.5,592.1 990.5,582.3 993.5,576.6 997.5,575.3 1001.5,593.7 1005.5,604.0 1009.5,614.3 1012.5,621.0 1016.5,623.7 1020.5,624.3 1024.5,613.5 1028.5,608.8 1032.5,590.5 1035.5,634.5 1039.5,649.1 1043.5,637.0 1047.5,615.8 1051.5,621.0 1054.5,630.4 1058.5,629.4 1062.5,634.3 1066.5,638.9 1070.5,620.3 1073.5,620.7 1077.5,618.8 1081.5,614.8 1085.5,624.6 1089.5,635.4 1093.5,645.7 1096.5,653.8 1100.5,665.6 1104.5,653.2 1108.5,642.0 1112.5,634.2 1115.5,644.2 1119.5,652.9 1123.5,665.7 1127.5,649.0 1131.5,632.3 1134.5,621.3 1138.5,629.9 1142.5,635.5 1146.5,634.4 1150.5,650.1 1153.5,662.0 1157.5,665.5 1161.5,669.0 1165.5,659.5 1169.5,641.7 1173.5,663.9 1176.5,636.6 1180.5,647.7 1184.5,625.2 1188.5,632.9 1192.5,616.4 1195.5,625.2 1199.5,618.8 1203.5,596.3 1207.5,608.2 1211.5,623.0 1214.5,629.4 1218.5,624.2 1222.5,626.6 1226.5,637.8 1230.5,617.6 1234.5,616.7 1237.5,624.9 1241.5,626.6 1245.5,638.5 1249.5,642.8 1253.5,650.0 1256.5,633.7 1260.5,623.8 1264.5,586.1 1268.5,571.1" fill="none" stroke="#7e57c2" stroke-width="1.1" stroke-linejoin="round"/>
<polyline points="10.5,514.5 14.5,515.0 18.5,515.7 22.5,518.3 25.5,521.2 29.5,525.4 33.5,529.7 37.5,535.0 41.5,540.3 44.5,545.6 48.5,550.8 52.5,555.4 56.5,559.5 60.5,561.4 64.5,563.2 67.5,564.0 71.5,563.2 75.5,561.6 79.5,558.9 83.5,555.4 86.5,553.9 90.5,553.9 94.5,554.7 98.5,554.7 102.5,554.5 105.5,553.1 109.5,550.9 113.5,549.7 117.5,549.8 121.5,549.3 125.5,549.5 128.5,552.3 132.5,554.0 136.5,555.5 140.5,555.0 144.5,555.6 147.5,553.9 151.5,553.5 155.5,553.0 159.5,553.1 163.5,553.5 166.5,554.2 170.5,555.3 174.5,556.8 178.5,558.6 182.5,559.7 186.5,563.0 189.5,568.1 193.5,572.9 197.5,575.1 201.5,578.5 205.5,580.5 208.5,582.2 212.5,584.3 216.5,585.5 220.5,585.2 224.5,584.4 227.5,582.8 231.5,579.9 235.5,574.9 239.5,569.6 243.5,564.0 246.5,559.7 250.5,556.9 254.5,553.2 258.5,549.4 262.5,546.7 266.5,546.1 269.5,545.6 273.5,546.8 277.5,547.2 281.5,550.3 285.5,553.6 288.5,556.8 292.5,559.8 296.5,563.8 300.5,567.1 304.5,569.8 307.5,571.9 311.5,574.5 315.5,577.2 319.5,579.6 323.5,582.4 327.5,584.6 330.5,587.7 334.5,587.8 338.5,588.2 342.5,588.7 346.5,589.9 349.5,589.9 353.5,591.1 357.5,592.3 361.5,593.4 365.5,593.7 368.5,592.9 372.5,590.4 376.5,586.1 380.5,584.4 384.5,582.4 387.5,581.7 391.5,582.7 395.5,585.4 399.5,586.5 403.5,586.5 407.5,586.6 410.5,587.5 414.5,589.6 418.5,592.9 422.5,594.7 426.5,596.7 429.5,600.9 433.5,604.0 437.5,606.2 441.5,606.9 445.5,605.8 448.5,604.9 452.5,604.4 456.5,604.1 460.5,603.9 464.5,604.2 468.5,604.6 471.5,603.7 475.5,604.7 479.5,605.8 483.5,603.7 487.5,600.4 490.5,599.4 494.5,599.4 498.5,600.3 502.5,599.8 506.5,599.4 509.5,600.5 513.5,600.9 517.5,600.3 521.5,598.5 525.5,597.0 528.5,595.0 532.5,594.2 536.5,596.9 540.5,600.3 544.5,603.5 548.5,603.8 551.5,604.0 555.5,604.8 559.5,606.5 563.5,607.6 567.5,607.9 570.5,608.8 574.5,611.3 578.5,614.0 582.5,615.7 586.5,614.5 589.5,611.5 593.5,608.3 597.5,603.9 601.5,601.2 605.5,600.4 609.5,599.0 612.5,597.0 616.5,594.4 620.5,592.2 624.5,588.4 628.5,585.2 631.5,582.7 635.5,581.2 639.5,582.2 643.5,584.6 647.5,586.9 650.5,590.4 654.5,591.8 658.5,590.2 662.5,587.9 666.5,586.8 669.5,584.5 673.5,583.0 677.5,583.0 681.5,581.4 685.5,578.8 689.5,576.2 692.5,573.2 696.5,570.3 700.5,567.6 704.5,562.0 708.5,561.2 711.5,561.3 715.5,561.0 719.5,558.6 723.5,558.0 727.5,557.1 730.5,556.1 734.5,555.3 738.5,554.8 742.5,554.9 746.5,555.3 750.5,554.4 753.5,554.4 757.5,555.7 761.5,554.6 765.5,555.1 769.5,554.7 772.5,554.4 776.5,552.0 780.5,549.0 784.5,545.4 788.5,541.2 791.5,537.5 795.5,533.2 799.5,528.5 803.5,525.3 807.5,521.5 811.5,518.8 814.5,516.5 818.5,512.7 822.5,510.6 826.5,511.9 830.5,514.7 833.5,519.1 837.5,523.2 841.5,527.4 845.5,532.5 849.5,537.1 852.5,541.0 856.5,542.5 860.5,544.2 864.5,545.9 868.5,548.8 871.5,551.9 875.5,554.0 879.5,554.4 883.5,555.9 887.5,557.1 891.5,560.1 894.5,563.4 898.5,567.0 902.5,572.2 906.5,577.9 910.5,584.9 913.5,591.4 917.5,597.0 921.5,602.0 925.5,606.0 929.5,608.8 932.5,613.0 936.5,615.2 940.5,616.7 944.5,617.6 948.5,618.3 952.5,618.1 955.5,616.3 959.5,614.3 963.5,611.9 967.5,609.5 971.5,607.1 974.5,605.3 978.5,603.7 982.5,604.5 986.5,602.8 990.5,600.9 993.5,598.8 997.5,595.8 1001.5,594.8 1005.5,594.3 1009.5,595.2 1012.5,596.9 1016.5,599.1 1020.5,600.8 1024.5,602.1 1028.5,602.0 1032.5,601.5 1035.5,603.9 1039.5,608.0 1043.5,611.9 1047.5,614.7 1051.5,618.0 1054.5,620.6 1058.5,622.4 1062.5,623.8 1066.5,625.1 1070.5,624.8 1073.5,624.6 1077.5,625.0 1081.5,625.4 1085.5,627.8 1089.5,627.9 1093.5,627.7 1096.5,628.8 1100.5,632.4 1104.5,634.7 1108.5,635.5 1112.5,635.9 1115.5,636.6 1119.5,637.6 1123.5,640.8 1127.5,642.9 1131.5,643.8 1134.5,644.3 1138.5,644.7 1142.5,644.7 1146.5,643.9 1150.5,643.6 1153.5,643.3 1157.5,644.2 1161.5,646.1 1165.5,648.0 1169.5,647.8 1173.5,648.6 1176.5,646.5 1180.5,646.4 1184.5,645.9 1188.5,646.7 1192.5,645.8 1195.5,645.0 1199.5,643.9 1203.5,640.1 1207.5,636.2 1211.5,633.2 1214.5,630.3 1218.5,627.8 1222.5,626.7 1226.5,624.9 1230.5,623.5 1234.5,621.3 1237.5,621.3 1241.5,620.8 1245.5,622.4 1249.5,623.7 1253.5,625.9 1256.5,628.6 1260.5,629.7 1264.5,627.0 1268.5,622.9" fill="none" stroke="#f5d033" stroke-width="1.1" stroke-linejoin="round"/>
<rect x="1495.300" y="35.200" width="86.200" height="28.200" rx="5" fill="none" stroke="#3a3a3a" stroke-width="1.1"/>
<g fill="#dcdcdc"><path d="M12.900 743.800H27V761H19.800V751H12.900Z"/><circle cx="32.400" cy="747.300" r="3.400"/><path d="M38.800 743.800H46.900L40.500 761H32.400Z"/></g>
</svg>
<div class="hdr"><div class="t" style="left:11.3px;top:10.2px;font-size:14.3px;color:#e6e6e6;transform:scaleX(0.962);transform-origin:0 50%;">trishacrypto7</div><div class="t" style="left:96.0px;top:10.2px;font-size:14.3px;color:#e6e6e6;transform:scaleX(0.962);transform-origin:0 50%;">created</div><div class="t" style="left:146.4px;top:10.2px;font-size:14.3px;color:#e6e6e6;transform:scaleX(1.032);transform-origin:0 50%;">with</div><div class="t" style="left:177.7px;top:10.2px;font-size:14.3px;color:#e6e6e6;transform:scaleX(0.931);transform-origin:0 50%;">TradingView.com,</div><div class="t" style="left:287.8px;top:10.2px;font-size:14.3px;color:#e6e6e6;transform:scaleX(0.816);transform-origin:0 50%;">Sep</div><div class="t" style="left:313.7px;top:10.2px;font-size:14.3px;color:#e6e6e6;transform:scaleX(0.868);transform-origin:0 50%;">23,</div><div class="t" style="left:337.1px;top:10.2px;font-size:14.3px;color:#e6e6e6;transform:scaleX(0.841);transform-origin:0 50%;">2025</div><div class="t" style="left:368.8px;top:10.2px;font-size:14.3px;color:#e6e6e6;transform:scaleX(0.906);transform-origin:0 50%;">06:57</div><div class="t" style="left:405.13px;top:10.2px;font-size:14.3px;color:#e6e6e6;transform:scaleX(0.871);transform-origin:0 50%;">UTC</div></div>
<div class="leg"><div class="t" style="left:19.51px;top:40.6px;font-size:13.3px;color:#c9c9c9;transform:scaleX(0.887);transform-origin:0 50%;">HYPERLIQUID</div><div class="t" style="left:105.9px;top:40.6px;font-size:13.3px;color:#c9c9c9;transform:scaleX(1.1);transform-origin:0 50%;">/</div><div class="t" style="left:114.46px;top:40.6px;font-size:13.3px;color:#c9c9c9;transform:scaleX(0.835);transform-origin:0 50%;">US</div><div class="t" style="left:134.02px;top:40.6px;font-size:13.3px;color:#c9c9c9;transform:scaleX(0.883);transform-origin:0 50%;">DOLLAR</div><div class="t" style="left:185.3px;top:40.6px;font-size:13.3px;color:#c9c9c9;transform:scaleX(1.0);transform-origin:0 50%;">·</div><div class="t" style="left:194.46px;top:40.6px;font-size:13.3px;color:#c9c9c9;transform:scaleX(0.936);transform-origin:0 50%;">1h</div><div class="t" style="left:213.3px;top:40.6px;font-size:13.3px;color:#c9c9c9;transform:scaleX(1.0);transform-origin:0 50%;">·</div><div class="t" style="left:221.26px;top:40.6px;font-size:13.3px;color:#c9c9c9;transform:scaleX(1.044);transform-origin:0 50%;">Pyth</div><div class="t" style="left:257.1px;top:40.6px;font-size:13.3px;color:#c9c9c9;transform:scaleX(0.89);transform-origin:0 50%;">O</div><div class="t" style="left:267.4px;top:40.6px;font-size:13.3px;color:#089981;transform:scaleX(0.955);transform-origin:0 50%;">47.93830296</div><div class="t" style="left:349.72px;top:40.6px;font-size:13.3px;color:#c9c9c9;transform:scaleX(0.975);transform-origin:0 50%;">H</div><div class="t" style="left:359.7px;top:40.6px;font-size:13.3px;color:#089981;transform:scaleX(0.961);transform-origin:0 50%;">48.79699103</div><div class="t" style="left:442.2px;top:40.6px;font-size:13.3px;color:#c9c9c9;transform:scaleX(1.0);transform-origin:0 50%;">L</div><div class="t" style="left:450.0px;top:40.6px;font-size:13.3px;color:#089981;transform:scaleX(0.966);transform-origin:0 50%;">47.89298442</div><div class="t" style="left:533.4px;top:40.6px;font-size:13.3px;color:#c9c9c9;transform:scaleX(0.9);transform-origin:0 50%;">C</div><div class="t" style="left:542.7px;top:40.6px;font-size:13.3px;color:#089981;transform:scaleX(0.964);transform-origin:0 50%;">48.71269168</div><div class="t" style="left:626.2px;top:40.6px;font-size:13.3px;color:#089981;transform:scaleX(0.95);transform-origin:0 50%;">+0.77832508</div><div class="t" style="left:706.0px;top:40.6px;font-size:13.3px;color:#089981;transform:scaleX(0.913);transform-origin:0 50%;">(+1.62%)</div></div>
<div class="t" style="left:1504.1px;top:42.4px;font-size:13.3px;color:#d8d8d8;transform:scaleX(0.896);transform-origin:0 50%;">USD</div>
<div style="position:absolute;left:1490px;top:31px;width:95px;height:436px;overflow:hidden">
<div class="t ax" style="left:10.5px;top:70.8px;">58.00000000</div>
<div class="t ax" style="left:10.5px;top:121.60000000000002px;">56.00000000</div>
<div class="t ax" style="left:10.5px;top:172.4px;">54.00000000</div>
<div class="t ax" style="left:10.5px;top:223.2px;">52.00000000</div>
<div class="t ax" style="left:10.5px;top:274.0px;">50.00000000</div>
<div class="t ax" style="left:10.5px;top:324.8px;">48.00000000</div>
<div class="t ax" style="left:10.5px;top:375.59999999999997px;">46.00000000</div>
<div class="t ax" style="left:10.5px;top:426.4px;">44.00000000</div>
</div>
<div class="t ax" style="left:1500.5px;top:487.8px;transform:scaleX(1.0);letter-spacing:0.1px;">80.00</div>
<div class="t ax" style="left:1500.5px;top:546.8px;transform:scaleX(1.0);letter-spacing:0.1px;">60.00</div>
<div class="t ax" style="left:1500.5px;top:604.8px;transform:scaleX(1.0);letter-spacing:0.1px;">40.00</div>
<div class="t ax" style="left:1500.5px;top:663.8px;transform:scaleX(1.0);letter-spacing:0.1px;">20.00</div>
<div style="position:absolute;left:1426px;top:335px;width:63.5px;height:19px;background:#089981;border-radius:2px 0 0 2px"></div>
<div style="position:absolute;left:1491px;top:335px;width:92px;height:19px;background:#089981;border-radius:0 2px 2px 0"></div>
<div style="position:absolute;left:1491px;top:562px;width:49px;height:19px;background:#7e57c2;border-radius:0 2px 2px 0"></div>
<div style="position:absolute;left:1491px;top:614px;width:49px;height:19px;background:#fdd835;border-radius:0 2px 2px 0"></div>
<div class="t" style="left:1429.74px;top:337.5px;font-size:13.3px;color:#fff;transform:scaleX(0.862);transform-origin:0 50%;-webkit-text-stroke:0.5px;">HYPEUSD</div>
<div class="t " style="left:1500.5px;top:337.5px;font-size:13px;color:#fff;-webkit-text-stroke:0.5px;">48.71269168</div>
<div class="t " style="left:1500.5px;top:565.5px;font-size:13px;color:#fff;-webkit-text-stroke:0.5px;">53.66</div>
<div class="t " style="left:1500.5px;top:617.5px;font-size:13px;color:#111;">36.00</div>
<div class="t " style="left:20px;top:478.5px;font-size:13px;">RSI (14, close)&nbsp; <span style="color:#7e57c2;margin-left:1.4px">53.66</span>&nbsp; <span style="color:#fdd835;margin-left:0.8px;letter-spacing:0.3px">36.00</span></div>
<div class="t tm" style="left:57px;top:696.5px;">10</div>
<div class="t tm" style="left:148px;top:696.5px;">11</div>
<div class="t tm" style="left:240px;top:696.5px;">12</div>
<div class="t tm" style="left:331px;top:696.5px;">13</div>
<div class="t tm" style="left:423px;top:696.5px;">14</div>
<div class="t tm" style="left:514px;top:696.5px;font-weight:bold;color:#d8d8d8;">15</div>
<div class="t tm" style="left:606px;top:696.5px;">16</div>
<div class="t tm" style="left:697px;top:696.5px;">17</div>
<div class="t tm" style="left:789px;top:696.5px;">18</div>
<div class="t tm" style="left:880px;top:696.5px;">19</div>
<div class="t tm" style="left:971px;top:696.5px;">20</div>
<div class="t tm" style="left:1063px;top:696.5px;">21</div>
<div class="t tm" style="left:1155px;top:696.5px;font-weight:bold;color:#d8d8d8;">22</div>
<div class="t tm" style="left:1246px;top:696.5px;">23</div>
<div class="t tm" style="left:1337px;top:696.5px;">24</div>
<div class="t tm" style="left:1429px;top:696.5px;">25</div>
<div class="t " style="left:54.6px;top:740.6px;font-size:24px;font-weight:bold;color:#dcdcdc;letter-spacing:-0.5px;-webkit-text-stroke:0;">TradingView</div>
</body></html>
